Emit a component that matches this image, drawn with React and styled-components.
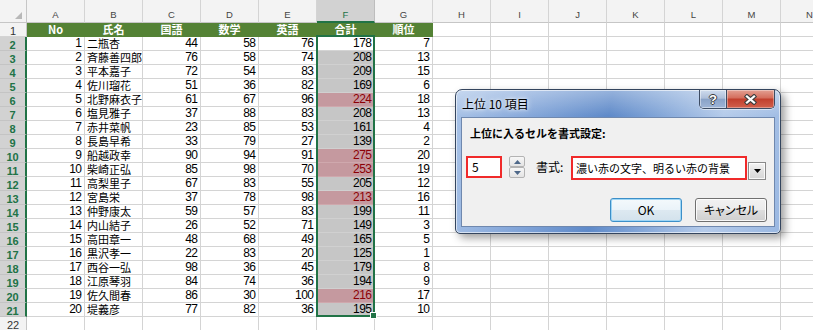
import React from 'react'
import styled, {createGlobalStyle} from 'styled-components'

const GlobalStyle = createGlobalStyle`
  *, *::before, *::after { box-sizing: border-box; }
  html, body { margin: 0; padding: 0; background: #fff; overflow: hidden; }
  body { font-family: "Noto Sans CJK JP", "Liberation Sans", sans-serif; }
`

const GRID = '#d4d4d4'
const GREEN = '#217346'
const HEAD_GREEN = '#548235'
const UI_FONT = '"Noto Sans CJK JP", "Liberation Sans", sans-serif'
const NUM_FONT = '"Liberation Sans", "Noto Sans CJK JP", sans-serif'

const COLS = ['A', 'B', 'C', 'D', 'E', 'F', 'G', 'H', 'I', 'J', 'K', 'L', 'M', 'N']
const HEADS = ['No', '氏名', '国語', '数学', '英語', '合計', '順位']
const BLANK = ['H', 'I', 'J', 'K', 'L', 'M', 'N']

const rows = [
    [1, '二瓶杏', 44, 58, 76, 178, 7],
    [2, '斉藤善四郎', 76, 58, 74, 208, 13],
    [3, '平本嘉子', 72, 54, 83, 209, 15],
    [4, '佐川瑠花', 51, 36, 82, 169, 6],
    [5, '北野麻衣子', 61, 67, 96, 224, 18],
    [6, '塩見雅子', 37, 88, 83, 208, 13],
    [7, '赤井菜帆', 23, 85, 53, 161, 4],
    [8, '長島早希', 33, 79, 27, 139, 2],
    [9, '船越政幸', 90, 94, 91, 275, 20],
    [10, '柴崎正弘', 85, 98, 70, 253, 19],
    [11, '高梨里子', 67, 83, 55, 205, 12],
    [12, '宮島栄', 37, 78, 98, 213, 16],
    [13, '仲野康太', 59, 57, 83, 199, 11],
    [14, '内山結子', 26, 52, 71, 149, 3],
    [15, '高田章一', 48, 68, 49, 165, 5],
    [16, '黒沢孝一', 22, 83, 20, 125, 1],
    [17, '西谷一弘', 98, 36, 45, 179, 8],
    [18, '江原琴羽', 84, 74, 36, 194, 9],
    [19, '佐久間春', 86, 30, 100, 216, 17],
    [20, '堤義彦', 77, 82, 36, 195, 10],
]

// top 10 rule with the count set to 5
const top = new Set(rows.map(r => r[5]).sort((a, b) => b - a).slice(0, 5))

const Sheet = styled.div`
  position: relative;
  width: 813px;
  height: 330px;
  overflow: hidden;
  background: #fff;
`

const Grid = styled.div`
  display: grid;
  grid-template-columns: 27px repeat(14, 58px);
  grid-template-rows: 23px repeat(22, 14px);
`

const Corner = styled.div`
  position: relative;
  background: #f3f3f3;
  border-right: 1px solid #c6c6c6;
  border-bottom: 1px solid #c6c6c6;
  &::after {
    content: '';
    position: absolute;
    right: 4px;
    bottom: 3px;
    border-style: solid;
    border-width: 0 0 7px 7px;
    border-color: transparent transparent #b8b8b8 transparent;
  }
`

const ColHead = styled.div`
  background: ${p => (p.$sel ? '#d2d2d2' : '#f3f3f3')};
  border-right: 1px solid ${p => (p.$sel ? '#bdbdbd' : GRID)};
  border-bottom: ${p => (p.$sel ? `2px solid ${GREEN}` : '1px solid #c6c6c6')};
  color: ${p => (p.$sel ? GREEN : '#444')};
  font: 9.5px ${NUM_FONT};
  text-align: center;
  line-height: 12px;
  padding-top: 9px;
`

const RowHead = styled.div`
  background: ${p => (p.$sel ? '#d2d2d2' : '#f3f3f3')};
  border-right: ${p => (p.$sel ? `2px solid ${GREEN}` : '1px solid #c6c6c6')};
  border-bottom: 1px solid ${p => (p.$sel ? '#c4c4c4' : GRID)};
  color: ${p => (p.$sel ? GREEN : '#333')};
  font: ${p => (p.$sel ? 700 : 400)} 11px ${NUM_FONT};
  text-align: center;
  line-height: 12px;
  padding-top: 2px;
`

const Cell = styled.div`
  background: ${p => p.$bg || '#fff'};
  border-right: 1px solid ${p => p.$line || GRID};
  border-bottom: 1px solid ${p => p.$line || GRID};
  color: ${p => p.$color || '#000'};
  font-family: ${p => (p.$num ? NUM_FONT : UI_FONT)};
  font-size: ${p => (p.$num ? '12px' : '11px')};
  letter-spacing: ${p => (p.$num ? '-0.5px' : '0')};
  font-weight: ${p => (p.$bold ? 700 : 400)};
  text-align: ${p => p.$align || 'left'};
  line-height: 13px;
  padding: 0 ${p => (p.$num ? '2.5px' : '2px')} 0 2px;
  white-space: nowrap;
`

const TOTAL_LOOK = {
    active: {bg: '#fff', line: GRID, color: '#000'},
    sel: {bg: '#c6c6c6', line: '#d0d0d0', color: '#000'},
    hot: {bg: '#c5999f', line: '#cfa8ad', color: '#8c0006'},
}

const TotalCell = styled(Cell)`
  background: ${p => TOTAL_LOOK[p.$kind].bg};
  border-bottom-color: ${p => TOTAL_LOOK[p.$kind].line};
  color: ${p => TOTAL_LOOK[p.$kind].color};
`

const Selection = styled.div`
  position: absolute;
  left: 316px;
  top: 35px;
  width: 59px;
  height: 282px;
  border: 2px solid ${GREEN};
  pointer-events: none;
`

const FillHandle = styled.div`
  position: absolute;
  right: -4px;
  bottom: -4px;
  width: 7px;
  height: 7px;
  background: ${GREEN};
  border: 1px solid #fff;
`

/* dialog */

const Dialog = styled.div`
  position: absolute;
  left: 455px;
  top: 89px;
  width: 326px;
  height: 145px;
  border: 1px solid #34455e;
  border-radius: 7px 7px 5px 5px;
  padding: 0 5px 6px;
  display: flex;
  flex-direction: column;
  background:
    linear-gradient(180deg, rgba(255, 255, 255, 0.35) 0%, rgba(255, 255, 255, 0) 18%),
    linear-gradient(100deg, #a9c3e7 0%, #86a8da 22%, #5f8ac9 45%, #7fa3d6 58%, #b5cbea 78%, #9ab8e2 100%);
  box-shadow: inset 0 0 0 1px rgba(255, 255, 255, 0.6), 4px 4px 9px rgba(0, 0, 0, 0.38);
`

const TitleBar = styled.div`
  height: 27px;
  display: flex;
  align-items: flex-start;
  padding-left: 1px;
`

const Title = styled.div`
  font: 12px ${UI_FONT};
  line-height: 27px;
  color: #000;
  text-shadow: 0 0 6px rgba(255, 255, 255, 0.95), 0 0 3px rgba(255, 255, 255, 0.9);
`

const CaptionButtons = styled.div`
  margin-left: auto;
  display: flex;
  height: 19px;
  border: 1px solid #3d4c63;
  border-top: none;
  border-radius: 0 0 5px 5px;
  overflow: hidden;
  box-shadow: 0 1px 0 rgba(255, 255, 255, 0.5);
`

const HelpButton = styled.div`
  width: 27px;
  border-right: 1px solid #3d4c63;
  background: linear-gradient(180deg, #cfdcee 0%, #aebfd9 45%, #8aa3c8 52%, #9fb5d6 100%);
  box-shadow: inset 0 0 0 1px rgba(255, 255, 255, 0.45);
  display: flex;
  align-items: center;
  justify-content: center;
  font: bold 13px "Liberation Sans", sans-serif;
  color: #fff;
  text-shadow: 1px 0 #3b3b3b, -1px 0 #3b3b3b, 0 1px #3b3b3b, 0 -1px #3b3b3b;
`

const CloseButton = styled.div`
  width: 47px;
  background: linear-gradient(180deg, #e3a093 0%, #d5705f 42%, #c2402e 52%, #d1604c 100%);
  box-shadow: inset 0 0 0 1px rgba(255, 255, 255, 0.35);
  display: flex;
  align-items: center;
  justify-content: center;
`

const Client = styled.div`
  flex: 1;
  background: #f0f0f0;
  border: 1px solid #6f88ae;
  display: flex;
  flex-direction: column;
  padding: 7px 7px 4px 4px;
`

const Heading = styled.div`
  margin-left: 4px;
  font: bold 11px ${UI_FONT};
  line-height: 16px;
  color: #000;
`

const FormRow = styled.div`
  margin-top: 15px;
  display: flex;
  align-items: flex-start;
  height: 24px;
`

const NumberBox = styled.div`
  width: 36px;
  height: 22px;
  border: 2px solid #f02a2a;
  background: #fff;
  padding-left: 4px;
  font: 12px ${UI_FONT};
  line-height: 18px;
  color: #000;
`

const Spinner = styled.div`
  margin-left: 7px;
  width: 16px;
  height: 22px;
  display: flex;
  flex-direction: column;
`

const SpinButton = styled.div`
  flex: 1;
  border: 1px solid #b3b3b3;
  border-radius: 2px;
  background: linear-gradient(180deg, #f7f7f7 0%, #e4e4e4 100%);
  display: flex;
  align-items: center;
  justify-content: center;
`

const FormLabel = styled.div`
  margin-left: 11px;
  width: 35px;
  font: 12px ${UI_FONT};
  line-height: 22px;
  color: #000;
`

const ComboField = styled.div`
  width: 176px;
  height: 24px;
  border: 2px solid #f02a2a;
  background: #fff;
  padding-left: 3px;
  font: 11px ${UI_FONT};
  line-height: 20px;
  color: #000;
  white-space: nowrap;
  overflow: hidden;
`

const DropButton = styled.div`
  margin: 6px 0 0 1px;
  width: 18px;
  height: 18px;
  border: 1px solid #8a8a8a;
  background: linear-gradient(180deg, #f4f4f4 0%, #e2e2e2 50%, #d6d6d6 100%);
  box-shadow: inset 0 0 0 1px rgba(255, 255, 255, 0.8);
  display: flex;
  align-items: center;
  justify-content: center;
`

const ButtonRow = styled.div`
  margin-top: auto;
  display: flex;
  justify-content: flex-end;
  gap: 13px;
`

const DlgButton = styled.div`
  width: 72px;
  height: 24px;
  border: 1px solid ${p => (p.$default ? '#3c8fc8' : '#707070')};
  border-radius: 3px;
  background: ${p =>
        p.$default
            ? 'linear-gradient(180deg, #f4f9fc 0%, #eaf3f9 50%, #dde9f1 51%, #d3e2ec 100%)'
            : 'linear-gradient(180deg, #f2f2f2 0%, #ebebeb 50%, #dddddd 51%, #cfcfcf 100%)'};
  box-shadow: inset 0 0 0 1px ${p => (p.$default ? '#9fd6f5' : 'rgba(255, 255, 255, 0.85)')};
  font: 12px ${UI_FONT};
  font-feature-settings: "palt";
  line-height: 22px;
  text-align: center;
  color: #000;
`

function CloseGlyph() {
    const d = 'M4 2.5 L11 8.5 M11 2.5 L4 8.5'
    return (
        <svg width="15" height="11" viewBox="0 0 15 11">
            <path d={d} stroke="#3f3f3f" strokeWidth="4.4" strokeLinecap="square" fill="none" />
            <path d={d} stroke="#fff" strokeWidth="2.3" strokeLinecap="square" fill="none" />
        </svg>
    )
}

function Arrow({up, color}) {
    return (
        <svg width="7" height="4" viewBox="0 0 7 4">
            <path d={up ? 'M0 4 L3.5 0 L7 4 Z' : 'M0 0 L7 0 L3.5 4 Z'} fill={color} />
        </svg>
    )
}

function TopTenDialog() {
    return (
        <Dialog>
            <TitleBar>
                <Title>上位 10 項目</Title>
                <CaptionButtons>
                    <HelpButton>?</HelpButton>
                    <CloseButton>
                        <CloseGlyph />
                    </CloseButton>
                </CaptionButtons>
            </TitleBar>
            <Client>
                <Heading>上位に入るセルを書式設定:</Heading>
                <FormRow>
                    <NumberBox>5</NumberBox>
                    <Spinner>
                        <SpinButton>
                            <Arrow up color="#4e6889" />
                        </SpinButton>
                        <SpinButton>
                            <Arrow color="#4e6889" />
                        </SpinButton>
                    </Spinner>
                    <FormLabel>書式:</FormLabel>
                    <ComboField>濃い赤の文字、明るい赤の背景</ComboField>
                    <DropButton>
                        <Arrow color="#000" />
                    </DropButton>
                </FormRow>
                <ButtonRow>
                    <DlgButton $default>OK</DlgButton>
                    <DlgButton>キャンセル</DlgButton>
                </ButtonRow>
            </Client>
        </Dialog>
    )
}

function DataRow({row, index}) {
    const [no, name, ja, ma, en, total, rank] = row
    const kind = index === 0 ? 'active' : top.has(total) ? 'hot' : 'sel'
    return (
        <>
            <RowHead $sel>{index + 2}</RowHead>
            <Cell $num $align="right">{no}</Cell>
            <Cell>{name}</Cell>
            <Cell $num $align="right">{ja}</Cell>
            <Cell $num $align="right">{ma}</Cell>
            <Cell $num $align="right">{en}</Cell>
            <TotalCell $num $align="right" $kind={kind}>{total}</TotalCell>
            <Cell $num $align="right">{rank}</Cell>
            {BLANK.map(c => <Cell key={c} />)}
        </>
    )
}

export default function App() {
    return (
        <Sheet>
            <GlobalStyle />
            <Grid>
                <Corner />
                {COLS.map(c => (
                    <ColHead key={c} $sel={c === 'F'}>{c}</ColHead>
                ))}

                <RowHead>1</RowHead>
                {HEADS.map(h => (
                    <Cell key={h} $bg={HEAD_GREEN} $line={HEAD_GREEN} $color="#fff" $bold $align="center">
                        {h}
                    </Cell>
                ))}
                {BLANK.map(c => <Cell key={c} />)}

                {rows.map((r, i) => (
                    <DataRow key={r[0]} row={r} index={i} />
                ))}

                <RowHead>22</RowHead>
                {COLS.map(c => <Cell key={c} />)}
            </Grid>

            <Selection>
                <FillHandle />
            </Selection>

            <TopTenDialog />
        </Sheet>
    )
}
